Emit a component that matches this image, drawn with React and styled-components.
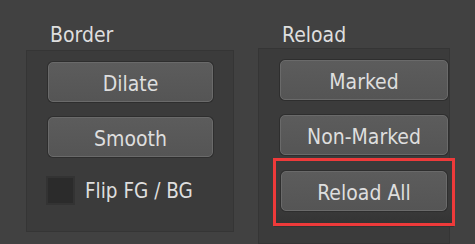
import React from 'react';
import styled, { createGlobalStyle } from 'styled-components';

const GlobalStyle = createGlobalStyle`
	html, body {
		margin: 0;
		padding: 0;
		background: #414141;
		overflow: hidden;
	}
	body {
		font-family: "DejaVu Sans Condensed", "DejaVu Sans", sans-serif;
		font-stretch: condensed;
		color: #dedede;
	}
`

const Page = styled.div`
	display: flex;
	gap: 24px;
	padding: 22px 0 0 26px;
	height: 244px;
	box-sizing: border-box;
`

const Group = styled.div`
	display: flex;
	flex-direction: column;
	width: ${p => p.width}px;
`

const Title = styled.div`
	height: 28px;
	line-height: 26px;
	padding-left: 24px;
	font-size: 21px;
`

const Panel = styled.div`
	display: flex;
	flex-direction: column;
	gap: 13px;
	box-sizing: border-box;
	height: ${p => p.height}px;
	padding: 10px ${p => p.padRight}px 0 21px;
	background: #3b3b3b;
	border: 1px solid #353535;
`

const Button = styled.button`
	display: block;
	width: 100%;
	height: 40px;
	box-sizing: border-box;
	border-radius: 5px;
	border: 1px solid #6a6a6a;
	box-shadow: 0 0 0 1px #2e2e2e;
	background: linear-gradient(#5c5c5c, #555555);
	color: #dedede;
	font-family: inherit;
	font-stretch: condensed;
	font-size: 21px;
	padding: 3px 0 0;
	margin: 1px 0;
`

const Highlight = styled.div`
	position: relative;
	margin-top: 1px;
	padding: 0 1px;

	&::before {
		content: "";
		position: absolute;
		left: -6px;
		right: -6px;
		top: -11px;
		bottom: -15px;
		background: linear-gradient(#3a3a3a 70%, #333333);
	}

	&::after {
		content: "";
		position: absolute;
		left: -7px;
		right: -7px;
		top: -12px;
		bottom: -14px;
		border: 3px solid #ee3a3a;
		pointer-events: none;
	}

	& > button {
		position: relative;
	}
`

const CheckRow = styled.label`
	display: flex;
	align-items: center;
	gap: 10px;
	margin: 5px 0 0 -2px;
	font-size: 20.5px;
`

const Box = styled.span`
	width: 29px;
	height: 29px;
	box-sizing: border-box;
	background: #2b2b2b;
	border: 2px solid #333333;
`

const App = () => {
	return (
		<>
			<GlobalStyle/>
			<Page>
				<Group width={208}>
					<Title>Border</Title>
					<Panel height={182} padRight={20}>
						<Button>Dilate</Button>
						<Button>Smooth</Button>
						<CheckRow>
							<Box/>
							Flip FG / BG
						</CheckRow>
					</Panel>
				</Group>
				<Group width={192}>
					<Title>Reload</Title>
					<Panel height={230} padRight={1}>
						<Button>Marked</Button>
						<Button>Non-Marked</Button>
						<Highlight>
							<Button>Reload All</Button>
						</Highlight>
					</Panel>
				</Group>
			</Page>
		</>
	);
};

export default App;
